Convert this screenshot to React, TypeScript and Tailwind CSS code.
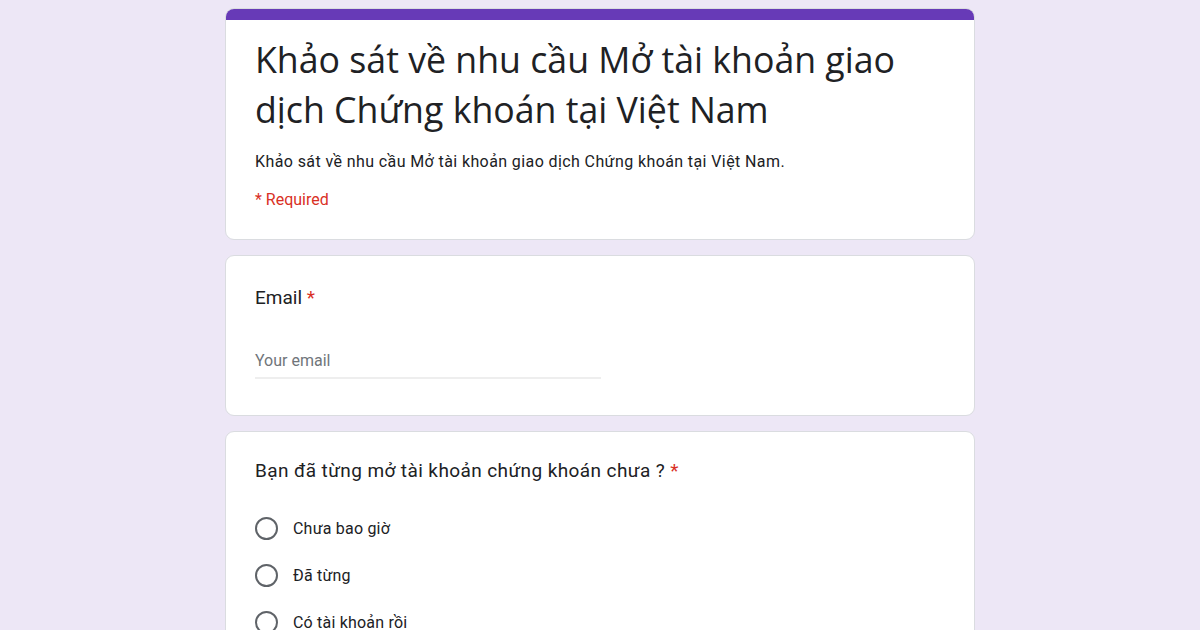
import React from "react";

const Radio = ({ label }: { label: string }) => (
  <div className="flex items-center h-[47px]">
    <div className="w-[23px] h-[23px] rounded-full border-[2px] border-[#5f6368] shrink-0" />
    <span className="ml-[15px] text-[16px] text-[#202124] tracking-[0.2px]">{label}</span>
  </div>
);

export default function App() {
  return (
    <div
      className="w-[1200px] h-[630px] overflow-hidden bg-[#ede7f6] flex flex-col items-center pt-[8px]"
      style={{ fontFamily: "Roboto, 'Noto Sans', sans-serif" }}
    >
      <div className="w-[750px] flex flex-col gap-[15px]">
        {/* Header card */}
        <div className="bg-white rounded-[9px] border border-[#dadce0] overflow-hidden">
          <div className="h-[11px] bg-[#673ab7]" />
          <div className="px-[29px] pt-[14px] pb-[27px]">
            <h1
              className="text-[35.7px] leading-[50px] text-[#202124]"
              style={{ fontFamily: "'Open Sans', Roboto, sans-serif" }}
            >
              Khảo sát về nhu cầu Mở tài khoản giao dịch Chứng khoán tại Việt Nam
            </h1>
            <p className="mt-[16px] text-[16px] text-[#202124] leading-[24px] tracking-[0.4px]">
              Khảo sát về nhu cầu Mở tài khoản giao dịch Chứng khoán tại Việt Nam.
            </p>
            <p className="mt-[14px] text-[16px] text-[#d93025] leading-[24px]">* Required</p>
          </div>
        </div>

        {/* Email card */}
        <div className="bg-white rounded-[9px] border border-[#dadce0] px-[29px] pt-[28px] pb-[36px]">
          <div className="text-[19px] leading-[28px] text-[#202124]">
            Email <span className="text-[#d93025]">*</span>
          </div>
          <div className="mt-[39px] w-[346px] border-b-2 border-[#eeeeee] pb-[6px] text-[16px] text-[#70757a] leading-[20px]">
            Your email
          </div>
        </div>

        {/* Question card */}
        <div className="bg-white rounded-[9px] border border-[#dadce0] px-[29px] pt-[25px] pb-[20px]">
          <div className="text-[19px] leading-[28px] text-[#202124] tracking-[0.4px]">
            Bạn đã từng mở tài khoản chứng khoán chưa ? <span className="text-[#d93025]">*</span>
          </div>
          <div className="mt-[20px] flex flex-col">
            <Radio label="Chưa bao giờ" />
            <Radio label="Đã từng" />
            <Radio label="Có tài khoản rồi" />
          </div>
        </div>
      </div>
    </div>
  );
}
